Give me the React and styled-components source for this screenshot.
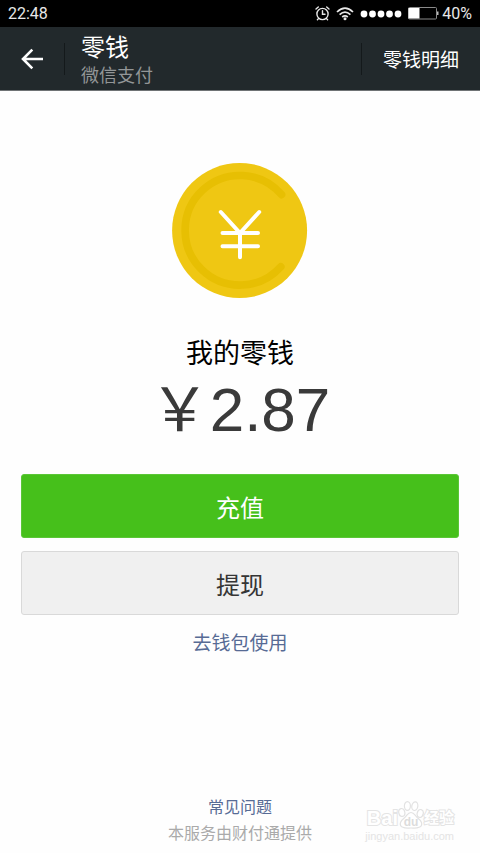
import React from "react";
import styled, { createGlobalStyle } from "styled-components";

const GlobalStyle = createGlobalStyle`
    * {
        box-sizing: border-box;
    }
    body {
        margin: 0;
        background-color: #fefefe;
        font-family: "Liberation Sans", "Noto Sans CJK SC", sans-serif;
    }
    button {
        font-family: inherit;
        cursor: pointer;
    }
    a {
        text-decoration: none;
    }
`

const Page = styled.div`
    position: relative;
    display: flex;
    flex-direction: column;
    min-height: 100vh;
`

const StatusBar = styled.div`
    display: flex;
    align-items: center;
    justify-content: space-between;
    height: 27px;
    padding: 0 8px;
    background-color: #000000;
    color: #e8e8e8;
    font-family: Roboto, sans-serif;
    font-size: 16px;
    line-height: 27px;
`

const StatusIcons = styled.div`
    display: flex;
    align-items: center;
    gap: 6px;
`

const BatteryBox = styled.div`
    display: flex;
    align-items: center;
    gap: 3px;
`

const Header = styled.header`
    display: flex;
    align-items: center;
    height: 64px;
    background-color: #22292c;
    border-bottom: 1px solid #6f7375;
`

const BackButton = styled.button`
    display: flex;
    align-items: center;
    justify-content: center;
    width: 64px;
    height: 63px;
    padding: 0;
    border: none;
    background: none;
`

const Divider = styled.div`
    width: 1px;
    height: 32px;
    background-color: #14191b;
`

const TitleBox = styled.div`
    flex: 1;
    padding: 5px 0 0 16px;
`

const Title = styled.h1`
    margin: 0;
    color: #ffffff;
    font-size: 24px;
    font-weight: 400;
    line-height: 30px;
`

const SubTitle = styled.div`
    color: #939697;
    font-size: 18px;
    line-height: 26px;
`

const DetailButton = styled.button`
    padding: 4px 21px 0;
    border: none;
    background: none;
    color: #ffffff;
    font-size: 19px;
    line-height: 26px;
`

const Content = styled.main`
    display: flex;
    flex-direction: column;
    align-items: center;
    padding: 72px 21px 0;
`

const BalanceLabel = styled.div`
    margin-top: 37px;
    color: #000000;
    font-size: 27px;
    line-height: 36px;
`

const Balance = styled.div`
    margin-top: 2px;
    color: #3a3a3a;
    font-size: 62px;
    line-height: 72px;
`

const Currency = styled.span`
    font-family: "Noto Sans CJK SC", sans-serif;
    font-size: 60px;
    line-height: 1;
`

const Actions = styled.div`
    display: flex;
    flex-direction: column;
    gap: 13px;
    width: 100%;
    margin-top: 28px;
`

const ActionButton = styled.button`
    height: 64px;
    border: 1px solid ${(props) => (props.$primary ? "#5bc637" : "#d9d9d9")};
    border-radius: 3px;
    background-color: ${(props) => (props.$primary ? "#46c01b" : "#f0f0f0")};
    color: ${(props) => (props.$primary ? "#ffffff" : "#353535")};
    font-size: 24px;
`

const TextLink = styled.a`
    color: #576b95;
    font-size: ${(props) => (props.$small ? "16px" : "19px")};
    line-height: 26px;
`

const WalletRow = styled.div`
    margin-top: 16px;
`

const Footer = styled.footer`
    display: flex;
    flex-direction: column;
    align-items: center;
    margin-top: auto;
    padding-bottom: 6px;
`

const Provider = styled.div`
    color: #aaaaaa;
    font-size: 16px;
    line-height: 26px;
`

// floats over the bottom right corner of the page
const Watermark = styled.div`
    position: absolute;
    right: 26px;
    bottom: 10px;
    color: #ffffff;
    font-weight: 700;
`

const WatermarkRow = styled.div`
    display: flex;
    align-items: flex-end;
    justify-content: flex-end;
    font-size: 20px;
    line-height: 22px;
`

const WatermarkText = styled.span`
    font-size: ${(props) => (props.$small ? "15px" : "20px")};
    -webkit-text-stroke: 2px #e4e4e4;
    paint-order: stroke fill;
`

const WatermarkUrl = styled.div`
    color: #e4e4e4;
    font-size: 11px;
    font-weight: 400;
    line-height: 14px;
    text-align: center;
`

const AlarmIcon = () => (
    <svg width="15" height="15" viewBox="0 0 15 15" fill="none" stroke="#e8e8e8" strokeWidth="1.4" strokeLinecap="round">
        <circle cx="7.5" cy="8" r="5.6" />
        <path d="M7.5 4.8V8.3H10M1 3L3.3 1M14 3L11.7 1M3.5 12.6L2.4 13.8M11.5 12.6L12.6 13.8" />
    </svg>
)

const WifiIcon = () => (
    <svg width="18" height="14" viewBox="0 0 18 14" fill="none" stroke="#e8e8e8" strokeWidth="1.7">
        <path d="M1 5Q9-2.6 17 5M3.6 7.6Q9 2.6 14.4 7.6M6.2 10Q9 7.6 11.8 10" />
        <circle cx="9" cy="11.8" r="1.5" fill="#e8e8e8" stroke="none" />
    </svg>
)

const SignalIcon = () => (
    <svg width="42" height="8" viewBox="0 0 42 8" fill="#ffffff">
        {[4, 12.5, 21, 29.5, 38].map((x) => (
            <circle key={x} cx={x} cy="4" r="3.4" />
        ))}
    </svg>
)

const BatteryIcon = () => (
    <svg width="31" height="13" viewBox="0 0 31 13">
        <rect x="0.5" y="0.5" width="28" height="11.5" rx="1" fill="none" stroke="#8a8a8a" />
        <rect x="0.5" y="1" width="11" height="10.5" fill="#ffffff" />
        <path d="M29 4.5H30.5V8H29Z" fill="#bbbbbb" />
    </svg>
)

const BackIcon = () => (
    <svg width="24" height="24" viewBox="0 0 24 24" fill="none" stroke="#ffffff" strokeWidth="2.6">
        <path d="M12.3 2.6L3 12L12.3 21.4M3 12H23" />
    </svg>
)

const CoinIcon = () => (
    <svg width="136" height="136" viewBox="0 0 136 136" fill="none" strokeLinecap="round">
        <circle cx="67.6" cy="67.5" r="67.5" fill="#efc713" />
        <path d="M109.5 31.6A54.8 54.8 0 1 0 108.8 103.8" stroke="#e7bf03" strokeWidth="7.6" />
        <path d="M48.8 49L68 70L87.2 49M50.5 70H86M50.5 83.2H86M68 70V94.2" stroke="#ffffff" strokeWidth="4" />
    </svg>
)

const PawIcon = () => (
    <svg width="26" height="28" viewBox="0 0 26 28" fill="#ffffff" stroke="#e2e2e2" strokeWidth="1.2">
        <ellipse cx="3.8" cy="11.5" rx="3" ry="4" transform="rotate(-12 3.8 11.5)" />
        <ellipse cx="9.4" cy="5" rx="3" ry="4.3" />
        <ellipse cx="16.8" cy="5.2" rx="3" ry="4.3" transform="rotate(10 16.8 5.2)" />
        <ellipse cx="22.2" cy="12.5" rx="3" ry="4" transform="rotate(14 22.2 12.5)" />
        <path d="M13 11.5C9.5 11.5 9 15 6 17.2C2.5 20 1.5 22 2.6 24.6C4 27.8 8.5 27 13 27C17.5 27 22 27.8 23.4 24.6C24.5 22 23.5 20 20 17.2C17 15 16.5 11.5 13 11.5Z" />
        <text x="13" y="25" textAnchor="middle" fontSize="12" fill="#dcdcdc" stroke="none">du</text>
    </svg>
)

const App = () => {
    return (
        <>
            <GlobalStyle />
            <Page>
                <StatusBar>
                    <span>22:48</span>
                    <StatusIcons>
                        <AlarmIcon />
                        <WifiIcon />
                        <SignalIcon />
                        <BatteryBox>
                            <BatteryIcon />
                            <span>40%</span>
                        </BatteryBox>
                    </StatusIcons>
                </StatusBar>
                <Header>
                    <BackButton aria-label="返回">
                        <BackIcon />
                    </BackButton>
                    <Divider />
                    <TitleBox>
                        <Title>零钱</Title>
                        <SubTitle>微信支付</SubTitle>
                    </TitleBox>
                    <Divider />
                    <DetailButton>零钱明细</DetailButton>
                </Header>
                <Content>
                    <CoinIcon />
                    <BalanceLabel>我的零钱</BalanceLabel>
                    <Balance>
                        <Currency>￥</Currency>2.87
                    </Balance>
                    <Actions>
                        <ActionButton $primary>充值</ActionButton>
                        <ActionButton>提现</ActionButton>
                    </Actions>
                    <WalletRow>
                        <TextLink href="#wallet">去钱包使用</TextLink>
                    </WalletRow>
                </Content>
                <Footer>
                    <TextLink href="#faq" $small>常见问题</TextLink>
                    <Provider>本服务由财付通提供</Provider>
                </Footer>
                <Watermark>
                    <WatermarkRow>
                        <WatermarkText>Bai</WatermarkText>
                        <PawIcon />
                        <WatermarkText $small>经验</WatermarkText>
                    </WatermarkRow>
                    <WatermarkUrl>jingyan.baidu.com</WatermarkUrl>
                </Watermark>
            </Page>
        </>
    );
}

export default App;
